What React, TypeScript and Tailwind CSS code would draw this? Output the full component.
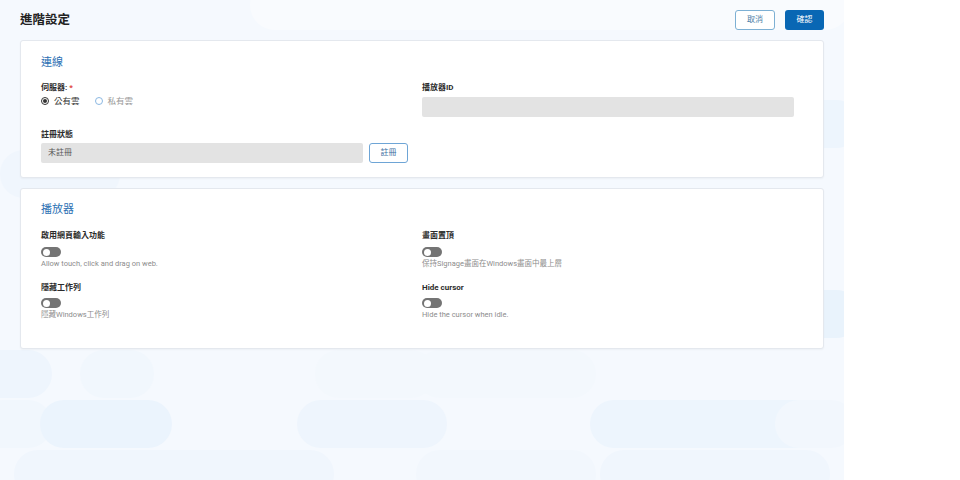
import React from "react";

function Toggle() {
  return (
    <div className="w-[20px] h-[10px] rounded-full bg-[#747474] flex items-center px-[1.5px]">
      <div className="w-[7px] h-[7px] rounded-full bg-white" />
    </div>
  );
}

function Radio({ checked, label }: { checked: boolean; label: string }) {
  return (
    <div className="flex items-center gap-[5px]">
      {checked ? (
        <div className="w-[8px] h-[8px] rounded-full border border-[#333] bg-white flex items-center justify-center">
          <div className="w-[4px] h-[4px] rounded-full bg-[#333]" />
        </div>
      ) : (
        <div className="w-[8px] h-[8px] rounded-full border border-[#8bb8e2] bg-white" />
      )}
      <span className={checked ? "text-[8.5px] leading-[10px] text-[#333]" : "text-[8.5px] leading-[10px] text-[#999]"}>{label}</span>
    </div>
  );
}

function Setting({ label, desc, first }: { label: string; desc: string; first?: boolean }) {
  return (
    <div className={first ? "flex flex-col" : "flex flex-col mt-[14px]"}>
      <div className="h-[10px] text-[8px] leading-[10px] font-bold text-[#2b2b2b]">{label}</div>
      <div className={first ? "mt-[6px]" : "mt-[5px]"}>
        <Toggle />
      </div>
      <div className="mt-[2px] h-[10px] text-[7.5px] leading-[10px] text-[#8c8c8c]">{desc}</div>
    </div>
  );
}

export default function App() {
  return (
    <div className="w-[960px] h-[480px] bg-white flex font-['Roboto','Noto_Sans_CJK_TC',sans-serif]">
      <div className="w-[844px] h-[480px] relative overflow-hidden bg-[#f5f9fe]">
        {/* decorative background pills */}
        <div className="absolute left-[-40px] top-[350px] w-[92px] h-[48px] rounded-full bg-[#eef5fd]" />
        <div className="absolute left-[80px] top-[350px] w-[74px] h-[48px] rounded-full bg-[#f1f7fd]" />
        <div className="absolute left-[-20px] top-[400px] w-[72px] h-[48px] rounded-full bg-[#f1f7fd]" />
        <div className="absolute left-[40px] top-[400px] w-[132px] h-[48px] rounded-[24px] bg-[#ebf4fd]" />
        <div className="absolute left-[14px] top-[450px] w-[320px] h-[48px] rounded-full bg-[#f0f6fd]" />
        <div className="absolute left-[315px] top-[350px] w-[120px] h-[48px] rounded-full bg-[#f3f8fd]" />
        <div className="absolute left-[297px] top-[400px] w-[150px] h-[48px] rounded-[24px] bg-[#eef5fd]" />
        <div className="absolute left-[590px] top-[400px] w-[260px] h-[48px] rounded-[24px] bg-[#edf5fd]" />
        <div className="absolute left-[416px] top-[450px] w-[180px] h-[48px] rounded-full bg-[#f2f7fd]" />
        <div className="absolute left-[600px] top-[450px] w-[230px] h-[48px] rounded-full bg-[#f0f6fd]" />
        <div className="absolute left-[775px] top-[400px] w-[80px] h-[48px] rounded-full bg-[#f2f7fd]" />
        <div className="absolute left-[416px] top-[350px] w-[180px] h-[48px] rounded-full bg-[#f3f8fd]" />
        <div className="absolute left-[780px] top-[290px] w-[80px] h-[48px] rounded-full bg-[#e9f3fc]" />
        <div className="absolute left-[780px] top-[100px] w-[80px] h-[48px] rounded-full bg-[#edf5fd]" />
        <div className="absolute left-[250px] top-[-20px] w-[600px] h-[50px] rounded-full bg-[#f9fbfe]" />
        <div className="absolute left-[0px] top-[150px] w-[120px] h-[48px] rounded-full bg-[#f0f6fd]" />

        <div className="relative flex flex-col px-[20px]">
          {/* header */}
          <div className="h-[40px] flex items-center justify-between">
            <div className="text-[12.5px] font-bold text-[#222]">進階設定</div>
            <div className="flex items-center gap-[10px]">
              <button className="w-[40px] h-[20px] rounded-[3px] border border-[#7db0d4] bg-white text-[8px] text-[#4d7ea6]">
                取消
              </button>
              <button className="w-[39px] h-[20px] rounded-[3px] bg-[#0967b4] text-[8px] text-white">
                確認
              </button>
            </div>
          </div>

          {/* card 1 */}
          <div className="bg-white rounded-[3px] border border-[#e4e8ee] shadow-[0_1px_2px_rgba(0,0,0,0.04)] pt-[14px] px-[20px] pb-[14px] flex flex-col">
            <div className="h-[16px] text-[11px] leading-[16px] text-[#2b6fb3]">連線</div>
            <div className="mt-[12px] flex">
              <div className="w-[381px] flex flex-col">
                <div className="h-[10px] text-[8px] leading-[10px] font-bold text-[#2b2b2b]">
                  伺服器: <span className="text-[#e0403a]">*</span>
                </div>
                <div className="mt-[3px] h-[10px] flex items-center gap-[15px]">
                  <Radio checked label="公有雲" />
                  <Radio checked={false} label="私有雲" />
                </div>
              </div>
              <div className="w-[372px] flex flex-col">
                <div className="h-[10px] text-[8px] leading-[10px] font-bold text-[#2b2b2b]">播放器ID</div>
                <div className="mt-[4px] h-[20px] rounded-[2px] bg-[#e3e3e3]" />
              </div>
            </div>
            <div className="mt-[13px] flex flex-col">
              <div className="h-[10px] text-[8px] leading-[10px] font-bold text-[#2b2b2b]">註冊狀態</div>
              <div className="mt-[3px] flex items-center gap-[6px]">
                <div className="w-[322px] h-[20px] rounded-[2px] bg-[#e3e3e3] flex items-center pl-[7px] text-[8px] text-[#555]">
                  未註冊
                </div>
                <button className="w-[39px] h-[20px] rounded-[3px] border border-[#6ea5d6] bg-white text-[8px] text-[#3a6e9e]">
                  註冊
                </button>
              </div>
            </div>
          </div>

          {/* card 2 */}
          <div className="mt-[10px] bg-white rounded-[3px] border border-[#e4e8ee] shadow-[0_1px_2px_rgba(0,0,0,0.04)] pt-[13px] px-[20px] pb-[28px] flex flex-col">
            <div className="h-[16px] text-[11px] leading-[16px] text-[#2b6fb3]">播放器</div>
            <div className="mt-[13px] flex">
              <div className="w-[381px] flex flex-col">
                <Setting first label="啟用網頁輸入功能" desc="Allow touch, click and drag on web." />
                <Setting label="隱藏工作列" desc="隱藏Windows工作列" />
              </div>
              <div className="w-[372px] flex flex-col">
                <Setting first label="畫面置頂" desc="保持Signage畫面在Windows畫面中最上層" />
                <Setting label="Hide cursor" desc="Hide the cursor when idle." />
              </div>
            </div>
          </div>
        </div>
      </div>
    </div>
  );
}
